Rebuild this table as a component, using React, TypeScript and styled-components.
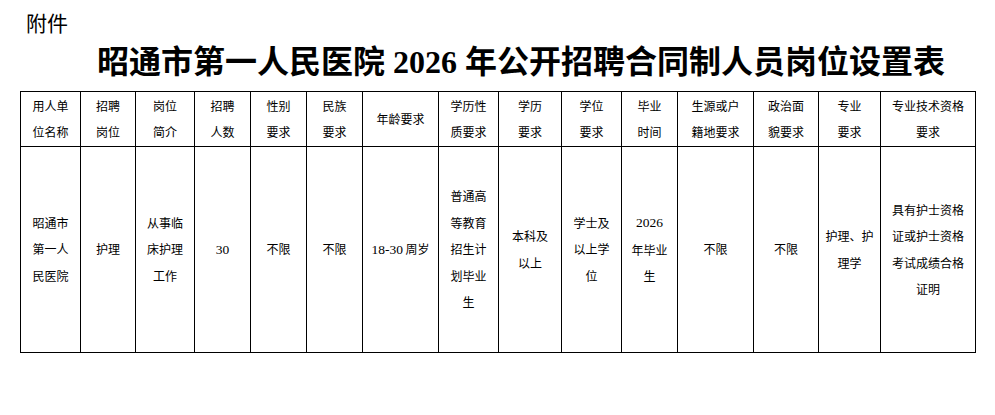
import styled, { createGlobalStyle } from "styled-components";

const GlobalStyle = createGlobalStyle`
  html, body {
    margin: 0;
    padding: 0;
    background: #fff;
  }
  body {
    font-family: "Noto Sans CJK SC", "Noto Sans", sans-serif;
    color: #000;
  }
`;

const Page = styled.div`
  width: 995px;
  height: 415px;
  padding: 0 0 0 20px;
  box-sizing: border-box;
`;

const Attachment = styled.div`
  font-size: 21px;
  line-height: 22px;
  padding: 11px 0 0 6px;
  height: 33px;
  box-sizing: border-box;
`;

const Title = styled.h1`
  margin: 0;
  padding-left: 77px;
  font-family: "Liberation Serif", "Noto Sans CJK SC", serif;
  font-weight: 700;
  font-size: 32px;
  line-height: 58px;
  height: 58px;
  white-space: nowrap;
`;

const Sheet = styled.table`
  border-collapse: collapse;
  table-layout: fixed;
  width: 956px;
  font-size: 12px;
`;

const HeadRow = styled.tr`
  height: 55px;
`;

const BodyRow = styled.tr`
  height: 206px;
`;

const Cell = styled.td`
  border: 1px solid #000;
  text-align: center;
  vertical-align: middle;
  padding: 0;
  line-height: 26.5px;
`;

const Line = styled.div`
  white-space: nowrap;
`;

// numbers in the sheet are set in a Times-like face, a touch larger
const Num = styled.span`
  font-family: "Liberation Serif", "Noto Sans CJK SC", serif;
  font-size: 13.5px;
`;

const widths = [60, 55, 59, 56, 56, 56, 76, 60, 63, 60, 56, 76, 65, 62, 95];

const headers: string[][] = [
  ["用人单", "位名称"],
  ["招聘", "岗位"],
  ["岗位", "简介"],
  ["招聘", "人数"],
  ["性别", "要求"],
  ["民族", "要求"],
  ["年龄要求"],
  ["学历性", "质要求"],
  ["学历", "要求"],
  ["学位", "要求"],
  ["毕业", "时间"],
  ["生源或户", "籍地要求"],
  ["政治面", "貌要求"],
  ["专业", "要求"],
  ["专业技术资格", "要求"],
];

const row: string[][] = [
  ["昭通市", "第一人", "民医院"],
  ["护理"],
  ["从事临", "床护理", "工作"],
  ["30"],
  ["不限"],
  ["不限"],
  ["18-30 周岁"],
  ["普通高", "等教育", "招生计", "划毕业", "生"],
  ["本科及", "以上"],
  ["学士及", "以上学", "位"],
  ["2026", "年毕业", "生"],
  ["不限"],
  ["不限"],
  ["护理、护", "理学"],
  ["具有护士资格", "证或护士资格", "考试成绩合格", "证明"],
];

const renderLine = (text: string, i: number) => {
  const m = text.match(/^([\d-]+)(.*)$/);
  if (m) {
    return (
      <Line key={i}>
        <Num>{m[1]}</Num>
        {m[2]}
      </Line>
    );
  }
  return <Line key={i}>{text}</Line>;
};

export default function App() {
  return (
    <>
      <GlobalStyle />
      <Page>
        <Attachment>附件</Attachment>
        <Title>昭通市第一人民医院 2026 年公开招聘合同制人员岗位设置表</Title>
        <Sheet>
          <colgroup>
            {widths.map((w, i) => (
              <col key={i} style={{ width: w }} />
            ))}
          </colgroup>
          <tbody>
            <HeadRow>
              {headers.map((lines, i) => (
                <Cell key={i}>{lines.map(renderLine)}</Cell>
              ))}
            </HeadRow>
            <BodyRow>
              {row.map((lines, i) => (
                <Cell key={i}>{lines.map(renderLine)}</Cell>
              ))}
            </BodyRow>
          </tbody>
        </Sheet>
      </Page>
    </>
  );
}
